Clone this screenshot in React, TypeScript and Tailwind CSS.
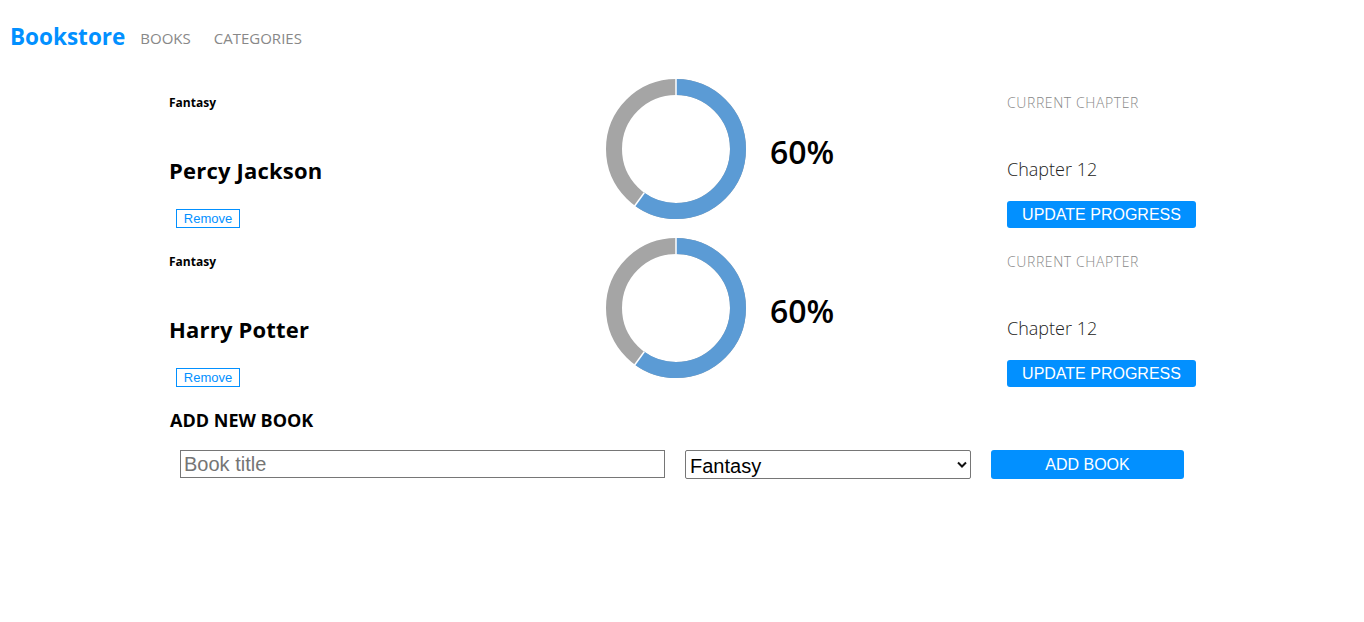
const books = [
  { id: 1, category: 'Fantasy', title: 'Percy Jackson', progress: 60, chapter: 'Chapter 12' },
  { id: 2, category: 'Fantasy', title: 'Harry Potter', progress: 60, chapter: 'Chapter 12' },
];

const sans = "font-['Open_Sans','Noto_Sans',sans-serif]";
const arial = "font-['Liberation_Sans',Arial,sans-serif]";

function Donut({ value }: { value: number }) {
  const r = 62;
  const c = 2 * Math.PI * r;
  const blue = (c * value) / 100;
  const angle = (value / 100) * 2 * Math.PI;
  const x1 = 71 + Math.sin(angle) * 54;
  const y1 = 71 - Math.cos(angle) * 54;
  const x2 = 71 + Math.sin(angle) * 71;
  const y2 = 71 - Math.cos(angle) * 71;
  return (
    <svg width="142" height="142" viewBox="0 0 142 142">
      <circle cx="71" cy="71" r={r} fill="none" stroke="#a5a5a5" strokeWidth="16" />
      <circle
        cx="71"
        cy="71"
        r={r}
        fill="none"
        stroke="#5b9bd5"
        strokeWidth="16"
        strokeDasharray={`${blue} ${c}`}
        transform="rotate(-90 71 71)"
      />
      <line x1="71" y1="0" x2="71" y2="17" stroke="#fff" strokeWidth="1.5" />
      <line x1={x1} y1={y1} x2={x2} y2={y2} stroke="#fff" strokeWidth="1.5" />
    </svg>
  );
}

function BookRow({ book }: { book: (typeof books)[number] }) {
  return (
    <li className="flex h-[159px]">
      <div className="w-[437px] flex flex-col items-start">
        <span className="mt-[17px] text-[12px] leading-4 font-bold text-black">{book.category}</span>
        <h2 className="mt-[44px] text-[22px] leading-[30px] font-bold text-black tracking-[0.2px]">{book.title}</h2>
        <button className={`${arial} mt-[24px] ml-[7px] w-[64px] h-[19px] border border-[#0290ff] text-[13px] leading-none text-[#0290ff] bg-white`}>
          Remove
        </button>
      </div>
      <div className="w-[401px] flex items-start">
        <div className="-ml-[1px]">
          <Donut value={book.progress} />
        </div>
        <span className="ml-[23px] mt-[52px] text-[32px] leading-[44px] font-semibold text-black">{book.progress}%</span>
      </div>
      <div className="flex flex-col items-start">
        <span className="mt-[15px] text-[14px] leading-5 font-light text-[#888] tracking-[0.6px]">CURRENT CHAPTER</span>
        <span className="mt-[43px] text-[18px] leading-[26px] font-light text-[#222]">{book.chapter}</span>
        <button className={`${arial} mt-[19px] w-[189px] h-[27px] rounded-[3px] bg-[#0290ff] text-white text-[16px] leading-none`}>
          UPDATE PROGRESS
        </button>
      </div>
    </li>
  );
}

export default function App() {
  return (
    <div className={`${sans} min-h-[622px] bg-white`}>
      <header className="flex items-center pt-[21px] pl-[10px] h-[53px]">
        <h1 className="text-[22.5px] leading-[30px] font-bold text-[#0290ff]">Bookstore</h1>
        <nav className="flex ml-[15px] gap-[23px] text-[15px] text-[#888] mt-[2px]">
          <span>BOOKS</span>
          <span>CATEGORIES</span>
        </nav>
      </header>
      <main className="ml-[169px] mt-[25px]">
        <ul>
          {books.map((b) => (
            <BookRow key={b.id} book={b} />
          ))}
        </ul>
        <section className="mt-[12px] ml-[1px]">
          <h3 className="text-[18px] leading-6 font-bold text-black">ADD NEW BOOK</h3>
          <form className={`${arial} flex items-start mt-[18px] ml-[10px]`}>
            <input
              placeholder="Book title"
              className="w-[485px] h-[28px] border border-[#767676] px-[3px] text-[20px] placeholder:text-[#757575] outline-none"
            />
            <div className="relative ml-[20px]">
              <select className="appearance-none w-[286px] h-[29px] border border-[#767676] rounded-[2px] pl-[4px] text-[20px] text-black bg-white">
                <option>Fantasy</option>
              </select>
              <svg className="absolute right-[4px] top-[11px]" width="10" height="7" viewBox="0 0 10 7">
                <path d="M1 1.5 L5 5.5 L9 1.5" fill="none" stroke="#111" strokeWidth="2" />
              </svg>
            </div>
            <button type="button" className="ml-[20px] w-[193px] h-[29px] rounded-[3px] bg-[#0290ff] text-white text-[16px]">
              ADD BOOK
            </button>
          </form>
        </section>
      </main>
    </div>
  );
}
